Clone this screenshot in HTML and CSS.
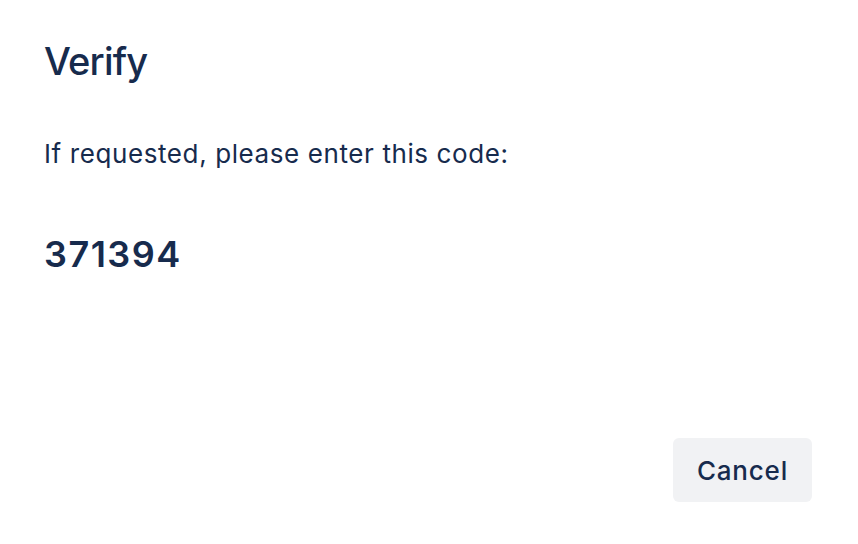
FILE: index.html
```html
<!DOCTYPE html>
<html>
<head>
<meta charset="utf-8">
<link rel="stylesheet" href="styles.css">
</head>
<body>
<div class="modal">
  <h1 class="title">Verify</h1>
  <p class="text">If requested, please enter this code:</p>
  <div class="code">371394</div>
  <div class="footer">
    <button class="btn">Cancel</button>
  </div>
</div>
</body>
</html>
```
FILE: styles.css
```css
html, body {
  margin: 0;
  padding: 0;
  background: #ffffff;
}
body {
  font-family: Inter, "Noto Sans", sans-serif;
  color: #172B4D;
  width: 858px;
  height: 544px;
}
.modal {
  display: flex;
  flex-direction: column;
  height: 544px;
  box-sizing: border-box;
  padding: 37px 46px 42px 44px;
}
.title {
  margin: 0;
  font-size: 38px;
  font-weight: 500;
  line-height: 48px;
  letter-spacing: -0.8px;
}
.text {
  margin: 53px 0 0 0;
  font-size: 26px;
  font-weight: 400;
  line-height: 32px;
  letter-spacing: 0.6px;
}
.code {
  margin-top: 62px;
  font-size: 36px;
  font-weight: 600;
  line-height: 44px;
  letter-spacing: 1.5px;
}
.footer {
  margin-top: auto;
  display: flex;
  justify-content: flex-end;
}
.btn {
  font-family: Inter, "Noto Sans", sans-serif;
  background: #F1F2F4;
  color: #172B4D;
  border: none;
  border-radius: 6px;
  width: 139px;
  height: 64px;
  font-size: 26px;
  font-weight: 500;
  letter-spacing: 0.8px;
  padding: 0;
}
```
